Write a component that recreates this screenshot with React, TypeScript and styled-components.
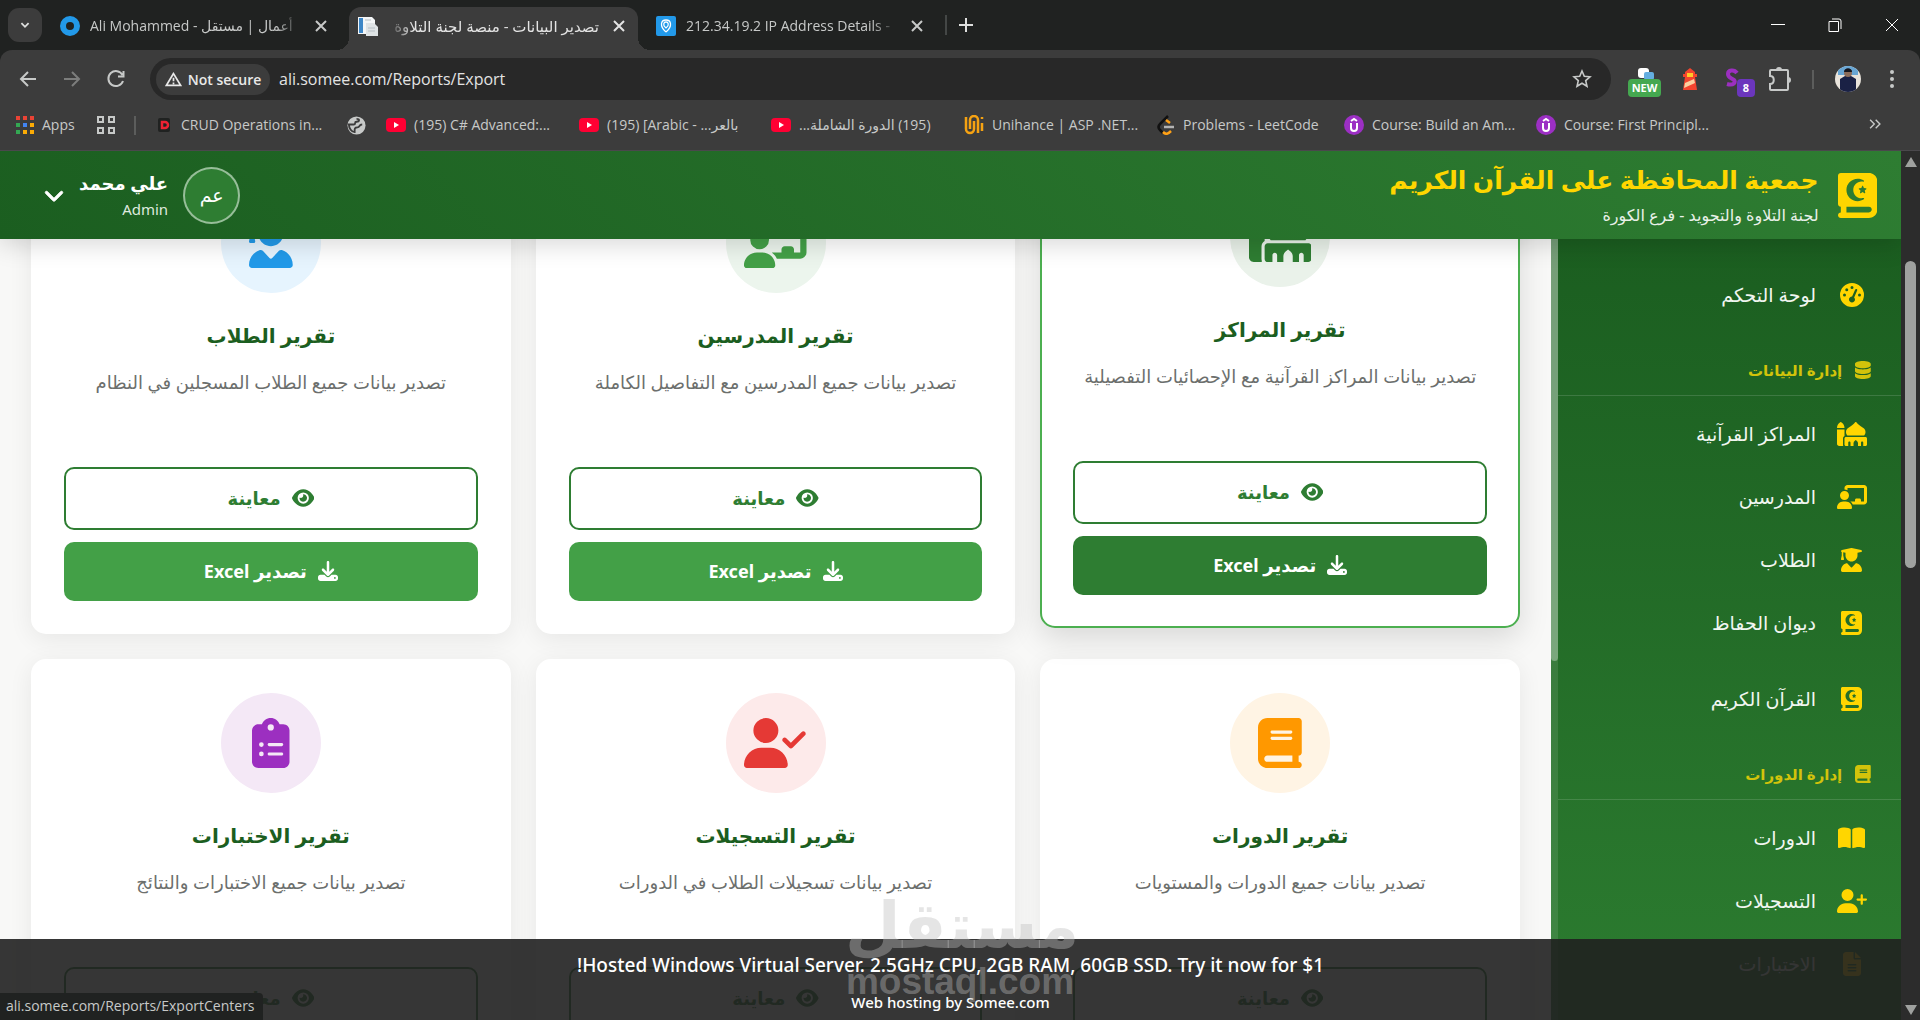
import React from "react";
import styled, { createGlobalStyle, css } from "styled-components";
import {
  FaBook,
  FaBookOpen,
  FaBookQuran,
  FaChalkboardUser,
  FaChevronDown,
  FaClipboardList,
  FaDatabase,
  FaDownload,
  FaEye,
  FaFileLines,
  FaGaugeHigh,
  FaMosque,
  FaUserCheck,
  FaUserGraduate,
  FaUserPlus,
} from "react-icons/fa6";

const uiFont = `"Open Sans", "DejaVu Sans", sans-serif`;
const pageFont = `"Noto Sans", "DejaVu Sans", sans-serif`;

const GlobalStyle = createGlobalStyle`
  *, *::before, *::after { box-sizing: border-box; }
  body { margin: 0; overflow: hidden; background: #202221; }
  button { font: inherit; color: inherit; background: none; border: 0; padding: 0; cursor: pointer; }
  a { color: inherit; text-decoration: none; }
  h1, h2, h3, p, ul { margin: 0; padding: 0; }
  ul { list-style: none; }
  svg[viewBox="0 0 640 512"] { aspect-ratio: 640 / 512; }
  svg[viewBox="0 0 576 512"] { aspect-ratio: 576 / 512; }
  svg[viewBox="0 0 448 512"] { aspect-ratio: 448 / 512; }
  svg[viewBox="0 0 384 512"] { aspect-ratio: 384 / 512; }
`;

const Window = styled.div`
  height: 100vh;
  display: flex;
  flex-direction: column;
  font-family: ${uiFont};
  color: #dedfde;
`;

/* ---------- Browser chrome ---------- */

const TabStrip = styled.div`
  height: 50px;
  flex: none;
  display: flex;
  align-items: center;
  gap: 9px;
  padding-left: 8px;
  background: #202221;
`;

const TabSearch = styled.button`
  width: 34px;
  height: 34px;
  border-radius: 11px;
  background: #3c3c3c;
  display: grid;
  place-items: center;
`;

const Tab = styled.div<{ $active?: boolean }>`
  position: relative;
  width: 289px;
  height: 43px;
  align-self: flex-end;
  display: flex;
  align-items: center;
  gap: 10px;
  padding: 0 9px 6px 9px;
  border-radius: 12px 12px 0 0;
  color: #c7c9c8;
  ${(p) =>
    p.$active &&
    css`
      background: #3c3c3c;
      color: #e3e3e3;
      &::before,
      &::after {
        content: "";
        position: absolute;
        bottom: 0;
        width: 12px;
        height: 12px;
      }
      &::before {
        left: -12px;
        background: radial-gradient(circle at 0 0, transparent 12px, #3c3c3c 12px);
      }
      &::after {
        right: -12px;
        background: radial-gradient(circle at 100% 0, transparent 12px, #3c3c3c 12px);
      }
    `}
`;

const TabTitle = styled.span`
  flex: 1;
  min-width: 0;
  overflow: hidden;
  white-space: nowrap;
  font-size: 14px;
  line-height: 24px;
  mask-image: linear-gradient(to right, #000 88%, transparent);
  &[dir="rtl"] {
    font-size: 15px;
    mask-image: linear-gradient(to left, #000 88%, transparent);
  }
`;

const TabClose = styled.button`
  width: 20px;
  height: 20px;
  display: grid;
  place-items: center;
`;

const StripDivider = styled.span`
  width: 2px;
  height: 20px;
  background: #444746;
`;

const WindowControls = styled.div`
  margin-left: auto;
  display: flex;
  button {
    width: 57px;
    height: 48px;
    display: grid;
    place-items: center;
    color: #fff;
  }
`;

const Toolbar = styled.div`
  height: 58px;
  flex: none;
  display: flex;
  align-items: center;
  padding: 0 6px;
  background: #3c3c3c;
  border-radius: 12px 12px 0 0;
`;

const ToolButton = styled.button<{ $dim?: boolean; $w?: number }>`
  width: ${(p) => p.$w ?? 44}px;
  height: 42px;
  flex: none;
  display: grid;
  place-items: center;
  color: ${(p) => (p.$dim ? "#7c7d7c" : "#c7c9c8")};
`;

const Omnibox = styled.div`
  flex: 1;
  height: 42px;
  margin: 0 11px 0 12px;
  padding: 0 10px 0 6px;
  display: flex;
  align-items: center;
  border-radius: 21px;
  background: #282828;
`;

const SecurityChip = styled.button`
  width: 114px;
  height: 31px;
  display: flex;
  align-items: center;
  justify-content: center;
  gap: 6px;
  border-radius: 16px;
  background: #3c3c3c;
  color: #e8e8e8;
  font-size: 14px;
  font-weight: 600;
  white-space: nowrap;
`;

const UrlInput = styled.input`
  flex: 1;
  height: 30px;
  margin-left: 7px;
  border: 0;
  outline: 0;
  background: transparent;
  color: #e3e3e3;
  font: 400 16px ${uiFont};
`;

const BookmarksBar = styled.nav`
  height: 43px;
  flex: none;
  display: flex;
  align-items: center;
  padding: 0 38px 8px 16px;
  background: #3c3c3c;
  border-bottom: 1px solid #4a484c;
`;

const Bookmark = styled.a<{ $w: number }>`
  width: ${(p) => p.$w}px;
  flex: none;
  display: flex;
  align-items: center;
  gap: 8px;
  font-size: 14px;
  line-height: 24px;
  white-space: nowrap;
  color: #c7c9c8;
`;

const BarDivider = styled.span`
  width: 2px;
  height: 19px;
  flex: none;
  margin-right: 21px;
  background: #5c5d5c;
`;

const ToolDivider = styled(BarDivider)`
  margin: 0 12px 0 10px;
`;

const Overflow = styled.button`
  margin-left: auto;
  color: #c7c9c8;
`;

const ExtensionSlot = styled.button`
  position: relative;
  width: 45px;
  height: 42px;
  flex: none;
  display: grid;
  place-items: center;
`;

const ExtensionBadge = styled.span<{ $bg: string; $w: number; $right: number }>`
  position: absolute;
  right: ${(p) => p.$right}px;
  bottom: 3px;
  width: ${(p) => p.$w}px;
  height: 18px;
  border-radius: 4px;
  background: ${(p) => p.$bg};
  color: #fff;
  font-size: 11px;
  font-weight: 700;
  line-height: 18px;
  text-align: center;
`;

/* ---------- Page ---------- */

const Viewport = styled.div`
  position: relative;
  flex: 1;
  min-height: 0;
  display: flex;
  overflow: hidden;
`;

const Page = styled.div`
  position: relative;
  flex: 1;
  min-width: 0;
  display: flex;
  flex-direction: column;
  overflow: hidden;
  background: #f8f8f7;
  font-family: ${pageFont};
`;

const Header = styled.header`
  position: relative;
  z-index: 2;
  height: 88px;
  flex: none;
  display: flex;
  align-items: center;
  justify-content: space-between;
  padding: 0 24px 0 44px;
  background: linear-gradient(-135deg, #2e7d32, #1b5e20);
  box-shadow: 0 5px 24px rgba(0, 0, 0, 0.16);
  color: #fff;
`;

const Brand = styled.div`
  display: flex;
  align-items: center;
  gap: 19px;
  > svg {
    width: auto;
    height: 45px;
    color: #ffd600;
  }
`;

const BrandTitle = styled.h1`
  font-size: 25px;
  font-weight: 700;
  line-height: 40px;
  color: #ffd600;
`;

const BrandSub = styled.p`
  font-size: 16px;
  line-height: 32px;
  color: #e9f1e9;
`;

const UserMenu = styled.button`
  display: flex;
  align-items: center;
  gap: 15px;
  text-align: right;
  > svg {
    width: auto;
    height: 20px;
    stroke: currentColor;
    stroke-width: 24px;
  }
`;

const Avatar = styled.span`
  width: 57px;
  height: 57px;
  border: 2px solid rgba(255, 255, 255, 0.5);
  border-radius: 50%;
  background: #2e7d32;
  display: grid;
  place-items: center;
  font-size: 19px;
  font-weight: 400;
`;

const UserName = styled.strong`
  display: block;
  font-size: 18px;
  line-height: 28px;
`;

const UserRole = styled.span`
  display: block;
  font-size: 15px;
  line-height: 24px;
  color: #dfe9df;
`;

const Columns = styled.div`
  flex: 1;
  min-height: 0;
  display: flex;
`;

const Sidebar = styled.aside`
  width: 350px;
  flex: none;
  display: flex;
  overflow: hidden;
  background: linear-gradient(180deg, #1b5e20, #2c7c30);
  color: #f1f6f1;
`;

const SideNav = styled.nav`
  flex: 1;
  padding-top: 25px;
`;

const SideTrack = styled.div`
  width: 7px;
  background: rgba(255, 255, 255, 0.1);
`;

const SideThumb = styled.div`
  height: 54%;
  border-radius: 0 0 4px 4px;
  background: rgba(255, 255, 255, 0.33);
`;

const SideLink = styled.a`
  height: 63px;
  display: flex;
  align-items: center;
  gap: 20px;
  padding: 0 34px 2px 0;
  font-size: 19px;
  line-height: 30px;
`;

const SideIcon = styled.span`
  width: 31px;
  display: flex;
  justify-content: center;
  color: #ffd600;
  svg {
    flex: none;
    width: auto;
    height: 24px;
  }
`;

const SideList = styled.ul`
  & + & {
    margin-top: 13px;
  }
`;

const SideHeading = styled.h2`
  display: flex;
  align-items: center;
  gap: 13px;
  margin-bottom: 7px;
  padding: 28px 30px 10px 0;
  border-bottom: 1px solid rgba(255, 255, 255, 0.14);
  font-size: 15px;
  font-weight: 700;
  line-height: 30px;
  color: #d2c30b;
  svg {
    width: auto;
    height: 18px;
  }
`;

const Main = styled.main`
  flex: 1;
  min-width: 0;
  overflow: hidden;
`;

const CardGrid = styled.div`
  margin-top: -80px;
  padding: 0 31px;
  display: grid;
  grid-template-columns: repeat(3, minmax(0, 1fr));
  gap: 25px;
`;

const Card = styled.article<{ $lifted?: boolean }>`
  display: flex;
  flex-direction: column;
  align-items: center;
  padding: 32px 31px 31px;
  border: 2px solid ${(p) => (p.$lifted ? "#4caf50" : "#fff")};
  border-radius: 15px;
  background: #fff;
  box-shadow: ${(p) =>
    p.$lifted ? "0 10px 30px rgba(0,0,0,.13)" : "0 5px 25px rgba(0,0,0,.07)"};
  transform: ${(p) => (p.$lifted ? "translateY(-6px)" : "none")};
  text-align: center;
`;

const CardIcon = styled.span<{ $fg: string; $bg: string }>`
  width: 100px;
  height: 100px;
  border-radius: 50%;
  display: grid;
  place-items: center;
  color: ${(p) => p.$fg};
  background: ${(p) => p.$bg};
  svg {
    width: auto;
    height: 50px;
  }
`;

const CardTitle = styled.h3`
  margin-top: 24px;
  font-size: 20px;
  font-weight: 700;
  line-height: 38px;
  color: #1b5e20;
`;

const CardText = styled.p`
  min-height: 75px;
  margin: 12px 0 25px;
  font-size: 18px;
  line-height: 30px;
  white-space: nowrap;
  color: #6c6f6d;
`;

const action = css`
  align-self: stretch;
  display: flex;
  align-items: center;
  justify-content: center;
  gap: 11px;
  padding-bottom: 2px;
  border-radius: 10px;
  font-size: 18px;
  font-weight: 700;
  svg {
    width: auto;
    height: 20px;
  }
`;

const PreviewLink = styled.a`
  ${action}
  height: 63px;
  border: 2px solid #2e7d32;
  color: #2e7d32;
`;

const ExportLink = styled.a<{ $hot?: boolean }>`
  ${action}
  height: 59px;
  margin-top: 12px;
  background: ${(p) => (p.$hot ? "#2e7d32" : "#43a047")};
  color: #fff;
`;

const HostBanner = styled.footer`
  position: absolute;
  z-index: 3;
  inset: auto 0 0 0;
  height: 81px;
  padding-top: 9px;
  background: rgba(32, 32, 32, 0.9);
  color: #fff;
  text-align: center;
`;

const HostOffer = styled.a`
  display: block;
  font-size: 19px;
  font-weight: 500;
  line-height: 34px;
`;

const HostCredit = styled.a`
  display: block;
  margin-top: 5px;
  font-size: 15px;
  font-weight: 500;
  line-height: 30px;
`;

const Watermark = styled.div`
  position: absolute;
  z-index: 4;
  left: 845px;
  bottom: 20px;
  width: 230px;
  direction: ltr;
  text-align: center;
  white-space: nowrap;
  color: rgba(191, 191, 191, 0.4);
  pointer-events: none;
`;

const WatermarkArabic = styled.div`
  font: 700 64px "DejaVu Sans", sans-serif;
  line-height: 76px;
`;

const WatermarkLatin = styled.div`
  font: 700 37px "Liberation Sans", sans-serif;
  line-height: 36px;
`;

const StatusBubble = styled.div`
  position: absolute;
  z-index: 5;
  left: 0;
  bottom: 0;
  width: 263px;
  height: 27px;
  padding-left: 6px;
  border-radius: 0 4px 0 0;
  background: #202221;
  color: #c7c9c8;
  font-size: 14px;
  line-height: 26px;
`;

const ScrollBar = styled.div`
  width: 19px;
  flex: none;
  display: flex;
  flex-direction: column;
  align-items: center;
  justify-content: space-between;
  padding: 6px 0 5px;
  background: #2c2c2c;
  color: #9fa19f;
`;

const ScrollTrack = styled.div`
  flex: 1;
  padding-top: 94px;
`;

const ScrollThumb = styled.div`
  width: 11px;
  height: 307px;
  border-radius: 6px;
  background: #9fa19f;
`;

/* ---------- Drawings ---------- */

type Stroke = { size?: number; d: string; w?: number; box?: number };
const Line = ({ size = 20, d, w = 2, box = 20 }: Stroke) => (
  <svg width={size} height={size} viewBox={`0 0 ${box} ${box}`} fill="none" stroke="currentColor" strokeWidth={w}>
    <path d={d} />
  </svg>
);

const YouTube = () => (
  <svg width="20" height="20" viewBox="0 0 20 20">
    <rect y="3" width="20" height="14" rx="4" fill="#ff0033" />
    <path d="M8 7l5 3-5 3z" fill="#fff" />
  </svg>
);

const CourseIcon = () => (
  <svg width="20" height="20" viewBox="0 0 20 20">
    <circle cx="10" cy="10" r="10" fill="#9c2fc4" />
    <path d="M7 8v5a3 3 0 0 0 6 0V8M7 6l3-2 3 2" fill="none" stroke="#fff" strokeWidth="2" />
  </svg>
);

const AppsIcon = () => {
  const colors = ["#ea4335", "#ea4335", "#ea4335", "#34a853", "#4285f4", "#fbab05", "#34a853", "#fbab05", "#fbab05"];
  return (
    <svg width="18" height="18" viewBox="0 0 18 18">
      {colors.map((c, i) => (
        <rect key={i} x={(i % 3) * 7} y={Math.floor(i / 3) * 7} width="4" height="4" fill={c} />
      ))}
    </svg>
  );
};

const Close = () => <Line size={20} d="M5 5l10 10M15 5L5 15" />;

/* ---------- Data ---------- */

const mainLinks = [
  { label: "المراكز القرآنية", icon: <FaMosque /> },
  { label: "المدرسين", icon: <FaChalkboardUser /> },
  { label: "الطلاب", icon: <FaUserGraduate /> },
  { label: "ديوان الحفاظ", icon: <FaBookQuran /> },
];
const courseLinks = [
  { label: "الدورات", icon: <FaBookOpen /> },
  { label: "التسجيلات", icon: <FaUserPlus /> },
  { label: "الاختبارات", icon: <FaFileLines /> },
];

const reports = [
  { title: "تقرير المراكز", text: "تصدير بيانات المراكز القرآنية مع الإحصائيات التفصيلية", icon: <FaMosque />, fg: "#2e7d32", bg: "#eaf2ea", lifted: true },
  { title: "تقرير المدرسين", text: "تصدير بيانات جميع المدرسين مع التفاصيل الكاملة", icon: <FaChalkboardUser />, fg: "#43a047", bg: "#ecf5ed" },
  { title: "تقرير الطلاب", text: "تصدير بيانات جميع الطلاب المسجلين في النظام", icon: <FaUserGraduate />, fg: "#229ae9", bg: "#e6f4fe" },
  { title: "تقرير الدورات", text: "تصدير بيانات جميع الدورات والمستويات", icon: <FaBook />, fg: "#ff9800", bg: "#fff4e4" },
  { title: "تقرير التسجيلات", text: "تصدير بيانات تسجيلات الطلاب في الدورات", icon: <FaUserCheck />, fg: "#e53935", bg: "#fdeaea" },
  { title: "تقرير الاختبارات", text: "تصدير بيانات جميع الاختبارات والنتائج", icon: <FaClipboardList />, fg: "#9c2fc0", bg: "#f4e8f6" },
];

const NavItem = ({ label, icon }: { label: string; icon: React.ReactNode }) => (
  <li>
    <SideLink href="#">
      <SideIcon>{icon}</SideIcon>
      {label}
    </SideLink>
  </li>
);

const Chrome = () => (
  <>
    <TabStrip>
      <TabSearch aria-label="Search tabs">
        <Line size={18} d="M6 8l4 4 4-4" />
      </TabSearch>
      <Tab>
        <svg width="20" height="20" viewBox="0 0 20 20">
          <circle cx="10" cy="10" r="7" fill="none" stroke="#2299e9" strokeWidth="6" />
        </svg>
        <TabTitle>
          Ali Mohammed - <bdi dir="rtl">أعمال | مستقل</bdi>
        </TabTitle>
        <TabClose aria-label="Close tab"><Close /></TabClose>
      </Tab>
      <Tab $active>
        <svg width="20" height="20" viewBox="0 0 20 20">
          <path d="M0 1h14l3 3v14H0z" fill="#f4f6f7" />
          <path d="M1 2h4v15H1z" fill="#3d86c6" />
          <path d="M8 7h8l4 4v9H8z" fill="#dfe3e5" />
          <path d="M7 4h6M10 12h7M10 15h7" stroke="#b7bfc4" />
        </svg>
        <TabTitle dir="rtl">تصدير البيانات - منصة لجنة التلاوة</TabTitle>
        <TabClose aria-label="Close tab"><Close /></TabClose>
      </Tab>
      <Tab>
        <svg width="20" height="20" viewBox="0 0 20 20">
          <rect width="20" height="20" rx="2" fill="#2299e9" />
          <path d="M10 16C3 10 5 4 10 4s7 6 0 12M10 12c-4-3-2-6 0-6s4 3 0 6" fill="none" stroke="#fff" strokeWidth="1.3" />
        </svg>
        <TabTitle>212.34.19.2 IP Address Details -</TabTitle>
        <TabClose aria-label="Close tab"><Close /></TabClose>
      </Tab>
      <StripDivider />
      <TabClose aria-label="New tab"><Line d="M10 3v14M3 10h14" /></TabClose>
      <WindowControls>
        <button aria-label="Minimize"><Line d="M3 9.5h14" w={1} /></button>
        <button aria-label="Restore"><Line d="M4 6.500h9.500v10H4zM7 4h7a2 2 0 0 1 2 2v8" w={1} /></button>
        <button aria-label="Close"><Line d="M4 4l12 12M16 4L4 16" w={1} /></button>
      </WindowControls>
    </TabStrip>
    <Toolbar>
      <ToolButton aria-label="Back"><Line d="M18 10H3M10 3l-7 7 7 7" /></ToolButton>
      <ToolButton aria-label="Forward" $dim><Line d="M2 10h15M10 3l7 7-7 7" /></ToolButton>
      <ToolButton aria-label="Reload"><Line d="M16.500 6A7.500 7.500 0 1 0 17 12M17.500 2v5.500H12" /></ToolButton>
      <Omnibox>
        <SecurityChip>
          <Line size={17} d="M10 3L1.500 17h17zM10 8v4M10 13.500v2" />
          Not secure
        </SecurityChip>
        <UrlInput aria-label="Address" defaultValue="ali.somee.com/Reports/Export" />
        <ToolButton aria-label="Bookmark this page" $w={38}>
          <Line d="M10 2l2.300 5.300 5.700.5-4.300 3.800 1.300 5.700-5-3-5 3 1.300-5.700L2 7.800l5.700-.5z" w={1.6} />
        </ToolButton>
      </Omnibox>
      <ExtensionSlot aria-label="Extension, new">
        <svg width="20" height="26" viewBox="0 0 20 26">
          <rect x="3" y="2" width="11" height="10" rx="3" fill="#fff" />
          <rect x="9" y="6" width="10" height="8" rx="2" fill="#64aee0" />
        </svg>
        <ExtensionBadge $bg="#45a850" $w={33} $right={6}>NEW</ExtensionBadge>
      </ExtensionSlot>
      <ExtensionSlot aria-label="Lighthouse">
        <svg width="18" height="22" viewBox="0 0 18 22">
          <path d="M9 0l5 4v2h2v3h-2l2 13H2L4 9H2V6h2V4z" fill="#f4442e" />
          <path d="M6 5h6v4H6z" fill="#ffc928" />
          <path d="M4 15l9-4 1 4-11 5z" fill="#fbd0a0" />
        </svg>
      </ExtensionSlot>
      <ExtensionSlot aria-label="Extension, 8 items">
        <svg width="26" height="26" viewBox="0 0 26 26">
          <path d="M15 7C12 3 6 4 6 8s4 4 6 6 0 6-7 4" fill="none" stroke="#9c2fc0" strokeWidth="4" />
        </svg>
        <ExtensionBadge $bg="#6b36bd" $w={18} $right={2}>8</ExtensionBadge>
      </ExtensionSlot>
      <ExtensionSlot aria-label="Extensions">
        <svg width="24" height="26" viewBox="0 0 24 26" fill="none" stroke="#c7c9c8" strokeWidth="2">
          <path d="M3 4h16a1 1 0 0 1 1 1v18a1 1 0 0 1-1 1H3a1 1 0 0 1-1-1v-5c5 0 5-8 0-8V5a1 1 0 0 1 1-1z" />
          <path d="M8 4a3 3 0 0 1 6 0zM20 11a3 3 0 0 1 0 6z" fill="#c7c9c8" stroke="none" />
        </svg>
      </ExtensionSlot>
      <ToolDivider />
      <ToolButton aria-label="Profile">
        <svg width="26" height="26" viewBox="0 0 26 26">
          <clipPath id="face"><circle cx="13" cy="13" r="13" /></clipPath>
          <g clipPath="url(#face)">
            <path d="M0 0h26v26H0z" fill="#e9e4dc" />
            <path d="M3 0h20v9H3z" fill="#69a6d4" />
            <path d="M5 26V13l5-3h6l5 3v13z" fill="#1a2145" />
            <circle cx="13" cy="7" r="4" fill="#8c6c5a" />
            <path d="M9 6c0-5 8-5 8 0z" fill="#15151c" />
          </g>
        </svg>
      </ToolButton>
      <ToolButton aria-label="Menu">
        <svg width="6" height="20" viewBox="0 0 6 20" fill="currentColor">
          <circle cx="3" cy="3" r="2" /><circle cx="3" cy="10" r="2" /><circle cx="3" cy="17" r="2" />
        </svg>
      </ToolButton>
    </Toolbar>
    <BookmarksBar>
      <Bookmark href="#" $w={80}><AppsIcon />Apps</Bookmark>
      <Bookmark href="#" $w={38} aria-label="Tab groups">
        <Line d="M2 2h5v5H2zM13 2h5v5h-5zM2 13h5v5H2zM13 13h5v5h-5z" />
      </Bookmark>
      <BarDivider />
      <Bookmark href="#" $w={190}>
        <svg width="16" height="20" viewBox="0 0 16 20">
          <rect x="1" y="3" width="12" height="14" rx="2" fill="#202221" />
          <path d="M5 7h3a3 3 0 0 1 0 6H5z" fill="none" stroke="#ee2233" strokeWidth="2.500" />
        </svg>
        CRUD Operations in...
      </Bookmark>
      <Bookmark href="#" $w={39} aria-label="Website">
        <svg width="19" height="19" viewBox="0 0 20 20">
          <circle cx="10" cy="10" r="9.500" fill="#c7c9c8" />
          <path d="M10 3c4 0 3 3 0 3s0 3-3 3-3 0-5 0c0 4 3 8 6 8 0-4 0-5 3-5s1-3 5-3" fill="none" stroke="#3c3c3c" strokeWidth="2" />
        </svg>
      </Bookmark>
      <Bookmark href="#" $w={193}><YouTube />(195) C# Advanced:...</Bookmark>
      <Bookmark href="#" $w={192}><YouTube /><span>(195) [Arabic - <bdi dir="rtl">بالعر...</bdi></span></Bookmark>
      <Bookmark href="#" $w={193}><YouTube /><span dir="rtl">(195) الدورة الشاملة...</span></Bookmark>
      <Bookmark href="#" $w={193}>
        <svg width="20" height="20" viewBox="0 0 20 20" fill="none" stroke="#f5a212" strokeWidth="2.500">
          <path d="M2 2v12a4 4 0 0 0 8 0V6M6 14V5a4 4 0 0 1 8 0v13M18 8v8M18 2v2" />
        </svg>
        Unihance | ASP .NET...
      </Bookmark>
      <Bookmark href="#" $w={187}>
        <svg width="18" height="20" viewBox="0 0 18 20" fill="none" strokeWidth="2.500">
          <path d="M11 1L3 9c-2 2-2 4 0 6l3 3" stroke="#111" />
          <path d="M6 17c3 3 5 2 8-1M9 5l4 3" stroke="#ffa116" />
          <path d="M7 12h10" stroke="#b3b3b3" />
        </svg>
        Problems - LeetCode
      </Bookmark>
      <Bookmark href="#" $w={192}><CourseIcon />Course: Build an Am...</Bookmark>
      <Bookmark href="#" $w={190}><CourseIcon />Course: First Principl...</Bookmark>
      <Overflow aria-label="More bookmarks"><Line size={14} d="M3 4l6 6-6 6M11 4l6 6-6 6" /></Overflow>
    </BookmarksBar>
  </>
);

export default function App() {
  return (
    <Window>
      <GlobalStyle />
      <Chrome />
      <Viewport>
        <Page dir="rtl">
          <Header>
            <Brand>
              <FaBookQuran />
              <div>
                <BrandTitle>جمعية المحافظة على القرآن الكريم</BrandTitle>
                <BrandSub>لجنة التلاوة والتجويد - فرع الكورة</BrandSub>
              </div>
            </Brand>
            <UserMenu>
              <Avatar>عم</Avatar>
              <span>
                <UserName>علي محمد</UserName>
                <UserRole>Admin</UserRole>
              </span>
              <FaChevronDown />
            </UserMenu>
          </Header>
          <Columns>
            <Sidebar>
              <SideNav>
                <SideList>
                  <NavItem label="لوحة التحكم" icon={<FaGaugeHigh />} />
                </SideList>
                <SideHeading><FaDatabase />إدارة البيانات</SideHeading>
                <SideList>
                  {mainLinks.map((l) => <NavItem key={l.label} {...l} />)}
                </SideList>
                <SideList>
                  <NavItem label="القرآن الكريم" icon={<FaBookQuran />} />
                </SideList>
                <SideHeading><FaBook />إدارة الدورات</SideHeading>
                <SideList>
                  {courseLinks.map((l) => <NavItem key={l.label} {...l} />)}
                </SideList>
              </SideNav>
              <SideTrack><SideThumb /></SideTrack>
            </Sidebar>
            <Main>
              <CardGrid>
                {reports.map((r) => (
                  <Card key={r.title} $lifted={r.lifted}>
                    <CardIcon $fg={r.fg} $bg={r.bg}>{r.icon}</CardIcon>
                    <CardTitle>{r.title}</CardTitle>
                    <CardText>{r.text}</CardText>
                    <PreviewLink href="#"><FaEye />معاينة</PreviewLink>
                    <ExportLink href="#" $hot={r.lifted}><FaDownload />تصدير Excel</ExportLink>
                  </Card>
                ))}
              </CardGrid>
            </Main>
          </Columns>
          <HostBanner>
            <HostOffer href="#">Hosted Windows Virtual Server. 2.5GHz CPU, 2GB RAM, 60GB SSD. Try it now for $1!</HostOffer>
            <HostCredit href="#">Web hosting by Somee.com</HostCredit>
          </HostBanner>
        </Page>
        <ScrollBar>
          <svg width="12" height="10" viewBox="0 0 12 10" fill="currentColor"><path d="M6 0l6 10H0z" /></svg>
          <ScrollTrack><ScrollThumb /></ScrollTrack>
          <svg width="12" height="10" viewBox="0 0 12 10" fill="currentColor"><path d="M0 0h12L6 10z" /></svg>
        </ScrollBar>
        <Watermark>
          <WatermarkArabic>مستقل</WatermarkArabic>
          <WatermarkLatin>mostaql.com</WatermarkLatin>
        </Watermark>
        <StatusBubble>ali.somee.com/Reports/ExportCenters</StatusBubble>
      </Viewport>
    </Window>
  );
}
